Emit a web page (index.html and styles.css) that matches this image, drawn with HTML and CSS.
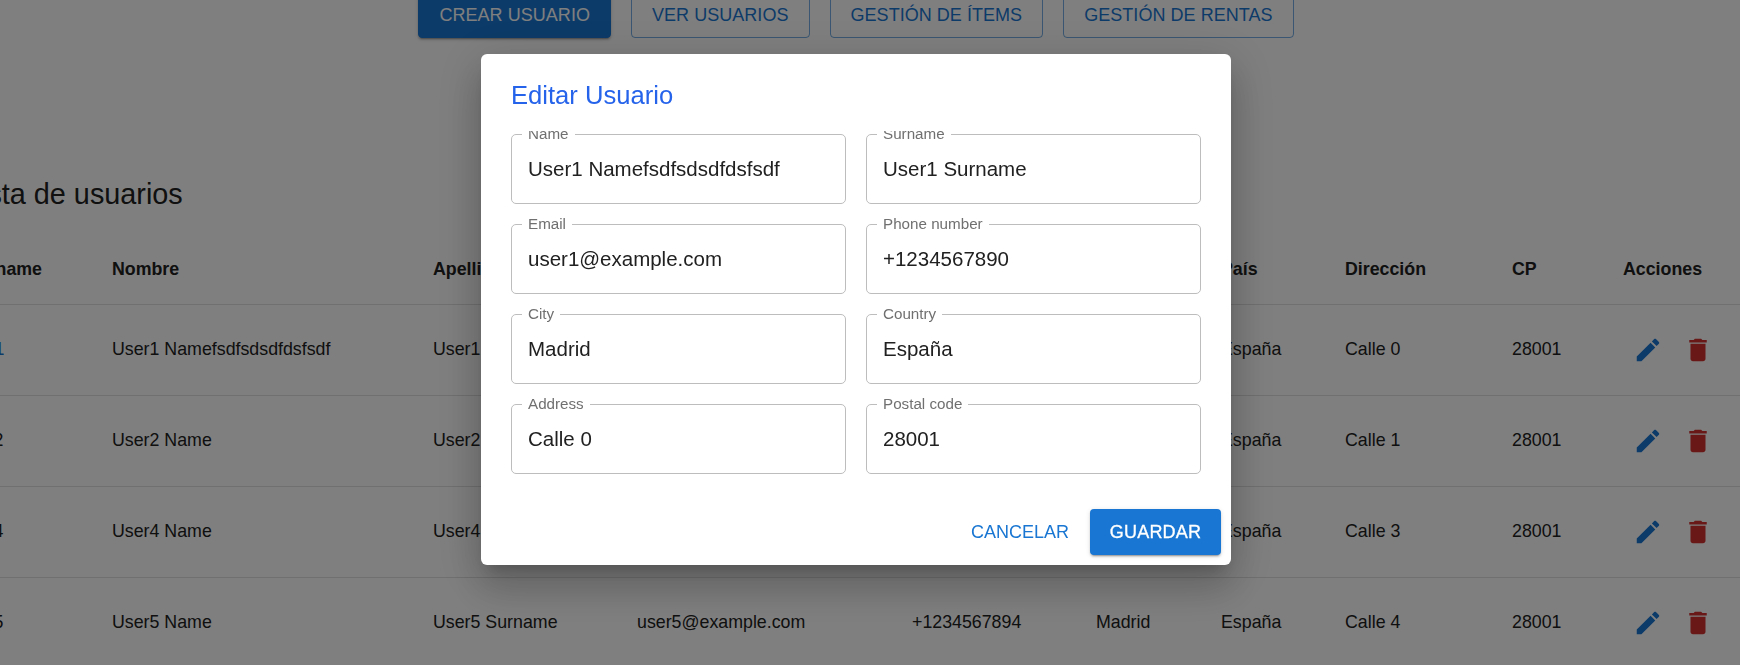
FILE: index.html
```html
<!DOCTYPE html>
<html lang="es">
<head>
    <meta charset="UTF-8">
    <title>Lista de usuarios</title>
    <link rel="stylesheet" href="styles.css">
</head>
<body>
<div class="page">
    <nav class="nav">
        <a class="nav-btn on">Crear usuario</a>
        <a class="nav-btn">Ver usuarios</a>
        <a class="nav-btn">Gestión de ítems</a>
        <a class="nav-btn">Gestión de rentas</a>
    </nav>
    <h2 class="list-title">Lista de usuarios</h2>
    <table class="users">
        <thead>
        <tr>
            <th class="c-user">Username</th>
            <th class="c-name">Nombre</th>
            <th class="c-surname">Apellido</th>
            <th class="c-email">Email</th>
            <th class="c-phone">Teléfono</th>
            <th class="c-city">Ciudad</th>
            <th class="c-country">País</th>
            <th class="c-address">Dirección</th>
            <th class="c-cp">CP</th>
            <th class="c-actions">Acciones</th>
        </tr>
        </thead>
        <tbody>
        <tr>
            <td class="username"><a class="user-link">user1</a></td>
            <td>User1 Namefsdfsdsdfdsfsdf</td>
            <td>User1 Surname</td>
            <td>user1@example.com</td>
            <td>+1234567890</td>
            <td>Madrid</td>
            <td>España</td>
            <td>Calle 0</td>
            <td>28001</td>
            <td class="actions">
                <svg class="icon icon-edit" viewBox="0 0 24 24"><path d="M3 17.25V21h3.75L17.81 9.94l-3.75-3.75L3 17.25zM20.71 7.04c.39-.39.39-1.02 0-1.41l-2.34-2.34c-.39-.39-1.02-.39-1.41 0l-1.83 1.83 3.75 3.75 1.83-1.83z"/></svg>
                <svg class="icon icon-delete" viewBox="0 0 24 24"><path d="M6 19c0 1.1.9 2 2 2h8c1.1 0 2-.9 2-2V7H6v12zM19 4h-3.5l-1-1h-5l-1 1H5v2h14V4z"/></svg>
            </td>
        </tr>
        <tr>
            <td class="username">user2</td>
            <td>User2 Name</td>
            <td>User2 Surname</td>
            <td>user2@example.com</td>
            <td>+1234567891</td>
            <td>Madrid</td>
            <td>España</td>
            <td>Calle 1</td>
            <td>28001</td>
            <td class="actions">
                <svg class="icon icon-edit" viewBox="0 0 24 24"><path d="M3 17.25V21h3.75L17.81 9.94l-3.75-3.75L3 17.25zM20.71 7.04c.39-.39.39-1.02 0-1.41l-2.34-2.34c-.39-.39-1.02-.39-1.41 0l-1.83 1.83 3.75 3.75 1.83-1.83z"/></svg>
                <svg class="icon icon-delete" viewBox="0 0 24 24"><path d="M6 19c0 1.1.9 2 2 2h8c1.1 0 2-.9 2-2V7H6v12zM19 4h-3.5l-1-1h-5l-1 1H5v2h14V4z"/></svg>
            </td>
        </tr>
        <tr>
            <td class="username">user4</td>
            <td>User4 Name</td>
            <td>User4 Surname</td>
            <td>user4@example.com</td>
            <td>+1234567893</td>
            <td>Madrid</td>
            <td>España</td>
            <td>Calle 3</td>
            <td>28001</td>
            <td class="actions">
                <svg class="icon icon-edit" viewBox="0 0 24 24"><path d="M3 17.25V21h3.75L17.81 9.94l-3.75-3.75L3 17.25zM20.71 7.04c.39-.39.39-1.02 0-1.41l-2.34-2.34c-.39-.39-1.02-.39-1.41 0l-1.83 1.83 3.75 3.75 1.83-1.83z"/></svg>
                <svg class="icon icon-delete" viewBox="0 0 24 24"><path d="M6 19c0 1.1.9 2 2 2h8c1.1 0 2-.9 2-2V7H6v12zM19 4h-3.5l-1-1h-5l-1 1H5v2h14V4z"/></svg>
            </td>
        </tr>
        <tr>
            <td class="username">user5</td>
            <td>User5 Name</td>
            <td>User5 Surname</td>
            <td>user5@example.com</td>
            <td>+1234567894</td>
            <td>Madrid</td>
            <td>España</td>
            <td>Calle 4</td>
            <td>28001</td>
            <td class="actions">
                <svg class="icon icon-edit" viewBox="0 0 24 24"><path d="M3 17.25V21h3.75L17.81 9.94l-3.75-3.75L3 17.25zM20.71 7.04c.39-.39.39-1.02 0-1.41l-2.34-2.34c-.39-.39-1.02-.39-1.41 0l-1.83 1.83 3.75 3.75 1.83-1.83z"/></svg>
                <svg class="icon icon-delete" viewBox="0 0 24 24"><path d="M6 19c0 1.1.9 2 2 2h8c1.1 0 2-.9 2-2V7H6v12zM19 4h-3.5l-1-1h-5l-1 1H5v2h14V4z"/></svg>
            </td>
        </tr>
        </tbody>
    </table>
</div>

<div class="overlay">
    <div class="dialog">
        <h2 class="dialog-title">Editar Usuario</h2>
        <div class="dialog-content">
            <div class="fields">
                <fieldset class="field"><legend>Name</legend><span class="value">User1 Namefsdfsdsdfdsfsdf</span></fieldset>
                <fieldset class="field"><legend>Surname</legend><span class="value">User1 Surname</span></fieldset>
                <fieldset class="field"><legend>Email</legend><span class="value">user1@example.com</span></fieldset>
                <fieldset class="field"><legend>Phone number</legend><span class="value">+1234567890</span></fieldset>
                <fieldset class="field"><legend>City</legend><span class="value">Madrid</span></fieldset>
                <fieldset class="field"><legend>Country</legend><span class="value">España</span></fieldset>
                <fieldset class="field"><legend>Address</legend><span class="value">Calle 0</span></fieldset>
                <fieldset class="field"><legend>Postal code</legend><span class="value">28001</span></fieldset>
            </div>
        </div>
        <div class="dialog-actions">
            <a class="btn-text">Cancelar</a>
            <a class="btn-main">Guardar</a>
        </div>
    </div>
</div>
</body>
</html>
```

FILE: styles.css
```css
* {
    margin: 0;
    padding: 0;
    box-sizing: border-box;
}

html, body {
    height: 100%;
    overflow: hidden;
}

body {
    background: #fff;
    color: #212121;
    font-family: "Liberation Sans", Arial, sans-serif;
}

.page {
    width: 1712px;
    margin-top: -8px;
}

.nav {
    display: flex;
    justify-content: center;
    gap: 20px;
}

.nav-btn {
    height: 46px;
    padding: 0 20px;
    display: flex;
    align-items: center;
    border: 1px solid rgba(25, 118, 210, 0.6);
    border-radius: 4px;
    color: #1976d2;
    font-size: 18px;
    letter-spacing: .04px;
    text-transform: uppercase;
}

.nav-btn.on {
    background: #1976d2;
    border-color: #1976d2;
    color: #fff;
    box-shadow: 0 3px 1px -2px rgba(0, 0, 0, .2), 0 2px 2px 0 rgba(0, 0, 0, .14), 0 1px 5px 0 rgba(0, 0, 0, .12);
}

.list-title {
    margin: 139px 0 0 -35px;
    font-size: 28.8px;
    font-weight: 400;
    line-height: 34px;
}

.users {
    width: 1812px;
    margin: 17px 0 0 -60px;
    border-collapse: collapse;
    table-layout: fixed;
    font-size: 17.8px;
}

.users th {
    height: 76px;
    padding: 8px 16px 0;
    text-align: left;
    font-weight: 700;
    border-bottom: 1px solid #e0e0e0;
}

.users td {
    height: 91px;
    padding: 0 16px 1px;
    border-bottom: 1px solid #e0e0e0;
}

.users tr:last-child td {
    border-bottom: 0;
}

.c-user { width: 156px; }
.c-name { width: 321px; }
.c-surname { width: 204px; }
.c-email { width: 275px; }
.c-phone { width: 184px; }
.c-city { width: 125px; }
.c-country { width: 124px; }
.c-address { width: 167px; }
.c-cp { width: 111px; }
.c-actions { width: 145px; }

.users .username {
    padding-left: 19px;
}

.user-link {
    padding-left: 1px;
    color: #1976d2;
}

.icon {
    display: block;
    width: 30px;
    height: 30px;
}

.users .actions {
    display: flex;
    align-items: center;
    gap: 20px;
    padding: 0 0 0 26px;
}

.icon-edit {
    fill: #1976d2;
}

.icon-delete {
    fill: #d32f2f;
}

/* modal */
.overlay {
    position: fixed;
    top: 0;
    left: 0;
    right: 0;
    bottom: 0;
    padding: 54px 28px 0 0;
    display: flex;
    justify-content: center;
    align-items: flex-start;
    background: rgba(0, 0, 0, 0.5);
}

.dialog {
    width: 750px;
    height: 511px;
    background: #fff;
    border-radius: 6px;
    box-shadow: 0 11px 15px -7px rgba(0, 0, 0, .2), 0 24px 38px 3px rgba(0, 0, 0, .14), 0 9px 46px 8px rgba(0, 0, 0, .12);
}

.dialog-title {
    padding: 25px 30px 0;
    height: 77px;
    font-size: 25.6px;
    font-weight: 400;
    line-height: 32px;
    color: #2563eb;
}

.dialog-content {
    height: 378px;
    padding: 3px 30px 0;
    overflow: hidden;
}

.fields {
    display: grid;
    grid-template-columns: 335px 335px;
    grid-auto-rows: 70px;
    gap: 20px;
}

.field {
    height: 77px;
    margin-top: -7px;
    padding: 0 16px;
    border: 1px solid #bdbdbd;
    border-radius: 5px;
}

.field legend {
    padding: 0 6px;
    margin-left: -6px;
    font-size: 15.2px;
    line-height: 14px;
    color: #707070;
}

.value {
    display: block;
    margin-top: 12px;
    font-size: 20.5px;
    line-height: 32px;
}

.dialog-actions {
    display: flex;
    justify-content: flex-end;
    align-items: center;
    gap: 10px;
    padding-right: 10px;
}

.btn-text {
    padding: 0 11px;
    color: #1976d2;
    font-size: 18px;
    text-transform: uppercase;
}

.btn-main {
    height: 46px;
    width: 131px;
    display: flex;
    align-items: center;
    justify-content: center;
    background: #1976d2;
    border-radius: 4px;
    color: #fff;
    font-size: 18px;
    letter-spacing: .2px;
    -webkit-text-stroke: .3px #fff;
    text-transform: uppercase;
    box-shadow: 0 3px 1px -2px rgba(0, 0, 0, .2), 0 2px 2px 0 rgba(0, 0, 0, .14), 0 1px 5px 0 rgba(0, 0, 0, .12);
}
```
